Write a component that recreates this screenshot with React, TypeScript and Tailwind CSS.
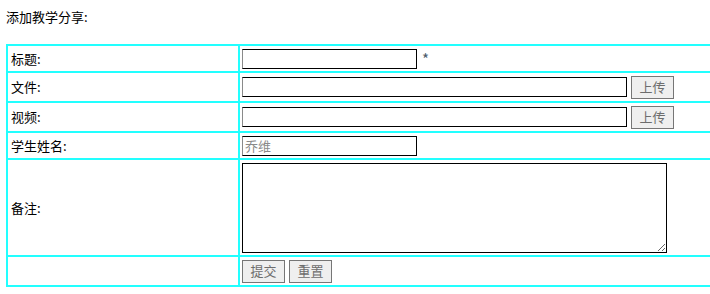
import { useState } from "react";

const font = { fontFamily: '"Microsoft YaHei", "Noto Sans CJK SC", "Noto Sans", sans-serif' };

type Row = {
  label: string;
  height: string;
  content: React.ReactNode;
};

function UploadButton() {
  return (
    <button
      type="button"
      className="ml-[4px] h-[23px] w-[43px] border border-[#767676] bg-[#efefef] text-[13px] text-[#6d6d6d]"
    >
      上传
    </button>
  );
}

export default function App() {
  const [title, setTitle] = useState("");
  const [note, setNote] = useState("");

  const inputCls =
    "h-[20px] border border-black border-l-[#8a8a8a] bg-white px-[2px] text-[13px] outline-none";

  const rows: Row[] = [
    {
      label: "标题:",
      height: "h-[27px]",
      content: (
        <div className="flex items-center">
          <input
            value={title}
            onChange={(e) => setTitle(e.target.value)}
            className={`${inputCls} w-[175px]`}
          />
          <span className="ml-[5px] text-[15px] leading-none text-[#4c5c6c]">*</span>
        </div>
      ),
    },
    {
      label: "文件:",
      height: "h-[30px]",
      content: (
        <div className="flex items-center">
          <input className={`${inputCls} w-[385px]`} />
          <UploadButton />
        </div>
      ),
    },
    {
      label: "视频:",
      height: "h-[30px]",
      content: (
        <div className="flex items-center">
          <input className={`${inputCls} w-[385px]`} />
          <UploadButton />
        </div>
      ),
    },
    {
      label: "学生姓名:",
      height: "h-[27px]",
      content: (
        <input
          defaultValue="乔维"
          className={`${inputCls} w-[175px] text-[#8a8a8a]`}
        />
      ),
    },
    {
      label: "备注:",
      height: "h-[97px]",
      content: (
        <textarea
          value={note}
          onChange={(e) => setNote(e.target.value)}
          className="block h-[90px] w-[425px] border border-black bg-white text-[13px] outline-none"
        />
      ),
    },
    {
      label: "",
      height: "h-[30px]",
      content: (
        <div className="flex items-center gap-[4px]">
          <button
            type="button"
            className="h-[23px] w-[43px] border border-[#767676] bg-[#efefef] text-[13px] text-[#6d6d6d]"
          >
            提交
          </button>
          <button
            type="button"
            className="h-[23px] w-[43px] border border-[#767676] bg-[#efefef] text-[13px] text-[#6d6d6d]"
          >
            重置
          </button>
        </div>
      ),
    },
  ];

  return (
    <div className="h-[294px] w-[710px] overflow-hidden bg-white text-black" style={font}>
      <p className="px-[6px] pt-[8px] text-[13px] leading-[18px]">添加教学分享:</p>
      <div className="ml-[6px] mt-[18px] w-[740px] border-l-2 border-t-2 border-[#22ffff]">
        {rows.map((row, i) => (
          <div key={i} className={`flex ${row.height}`}>
            <div className="flex w-[232px] items-center border-b-2 border-r-2 border-[#22ffff] pl-[3px] text-[13px]">
              {row.label}
            </div>
            <div className="flex flex-1 items-center border-b-2 border-r-2 border-[#22ffff] pl-[2px]">
              {row.content}
            </div>
          </div>
        ))}
      </div>
    </div>
  );
}
